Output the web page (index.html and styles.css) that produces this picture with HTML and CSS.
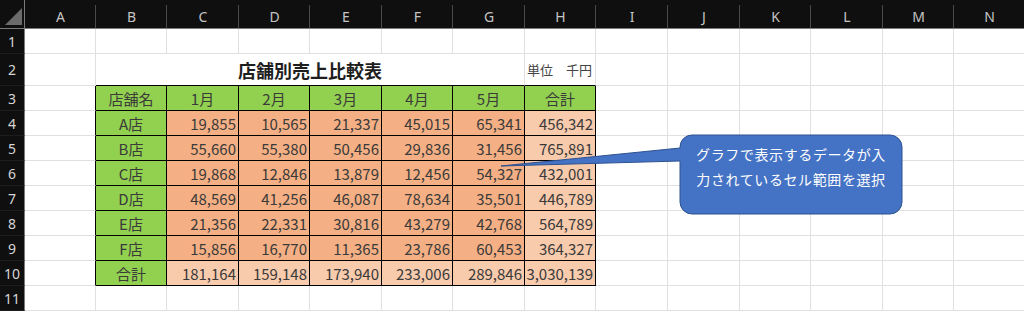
FILE: index.html
```html
<!DOCTYPE html>
<html lang="ja">
<head>
<meta charset="utf-8">
<title>店舗別売上比較表</title>
<link rel="stylesheet" href="styles.css">
</head>
<body>
<div class="sheet">
  <div class="row head">
    <div class="corner"><svg width="24" height="28" viewBox="0 0 24 28"><polygon points="5,25 22,8 22,25" fill="#6b6b6b"/></svg></div>
    <div class="col">A</div><div class="col">B</div><div class="col">C</div><div class="col">D</div><div class="col">E</div><div class="col">F</div><div class="col">G</div><div class="col">H</div><div class="col">I</div><div class="col">J</div><div class="col">K</div><div class="col">L</div><div class="col">M</div><div class="col">N</div>
  </div>
  <div class="row r1">
    <div class="num">1</div>
    <div class="c"></div><div class="c"></div><div class="c"></div><div class="c"></div><div class="c"></div><div class="c"></div><div class="c"></div><div class="c"></div><div class="c"></div><div class="c"></div><div class="c"></div><div class="c"></div><div class="c"></div><div class="c"></div>
  </div>
  <div class="row r2">
    <div class="num">2</div>
    <div class="c"></div>
    <div class="c title tt">店舗別売上比較表</div>
    <div class="c unit tt">単位　千円</div>
    <div class="c"></div><div class="c"></div><div class="c"></div><div class="c"></div><div class="c"></div><div class="c"></div>
  </div>
  <div class="row">
    <div class="num">3</div>
    <div class="c tl"></div>
    <div class="c t g ctr">店舗名</div><div class="c t g ctr">1月</div><div class="c t g ctr">2月</div><div class="c t g ctr">3月</div><div class="c t g ctr">4月</div><div class="c t g ctr">5月</div><div class="c t g ctr">合計</div>
    <div class="c"></div><div class="c"></div><div class="c"></div><div class="c"></div><div class="c"></div><div class="c"></div>
  </div>
  <div class="row">
    <div class="num">4</div>
    <div class="c tl"></div>
    <div class="c t g ctr">A店</div><div class="c t o">19,855</div><div class="c t o">10,565</div><div class="c t o">21,337</div><div class="c t o">45,015</div><div class="c t o">65,341</div><div class="c t p">456,342</div>
    <div class="c"></div><div class="c"></div><div class="c"></div><div class="c"></div><div class="c"></div><div class="c"></div>
  </div>
  <div class="row">
    <div class="num">5</div>
    <div class="c tl"></div>
    <div class="c t g ctr">B店</div><div class="c t o">55,660</div><div class="c t o">55,380</div><div class="c t o">50,456</div><div class="c t o">29,836</div><div class="c t o">31,456</div><div class="c t p">765,891</div>
    <div class="c"></div><div class="c"></div><div class="c"></div><div class="c"></div><div class="c"></div><div class="c"></div>
  </div>
  <div class="row">
    <div class="num">6</div>
    <div class="c tl"></div>
    <div class="c t g ctr">C店</div><div class="c t o">19,868</div><div class="c t o">12,846</div><div class="c t o">13,879</div><div class="c t o">12,456</div><div class="c t o">54,327</div><div class="c t p">432,001</div>
    <div class="c"></div><div class="c"></div><div class="c"></div><div class="c"></div><div class="c"></div><div class="c"></div>
  </div>
  <div class="row">
    <div class="num">7</div>
    <div class="c tl"></div>
    <div class="c t g ctr">D店</div><div class="c t o">48,569</div><div class="c t o">41,256</div><div class="c t o">46,087</div><div class="c t o">78,634</div><div class="c t o">35,501</div><div class="c t p">446,789</div>
    <div class="c"></div><div class="c"></div><div class="c"></div><div class="c"></div><div class="c"></div><div class="c"></div>
  </div>
  <div class="row">
    <div class="num">8</div>
    <div class="c tl"></div>
    <div class="c t g ctr">E店</div><div class="c t o">21,356</div><div class="c t o">22,331</div><div class="c t o">30,816</div><div class="c t o">43,279</div><div class="c t o">42,768</div><div class="c t p">564,789</div>
    <div class="c"></div><div class="c"></div><div class="c"></div><div class="c"></div><div class="c"></div><div class="c"></div>
  </div>
  <div class="row">
    <div class="num">9</div>
    <div class="c tl"></div>
    <div class="c t g ctr">F店</div><div class="c t o">15,856</div><div class="c t o">16,770</div><div class="c t o">11,365</div><div class="c t o">23,786</div><div class="c t o">60,453</div><div class="c t p">364,327</div>
    <div class="c"></div><div class="c"></div><div class="c"></div><div class="c"></div><div class="c"></div><div class="c"></div>
  </div>
  <div class="row">
    <div class="num">10</div>
    <div class="c tl"></div>
    <div class="c t g ctr">合計</div><div class="c t p">181,164</div><div class="c t p">159,148</div><div class="c t p">173,940</div><div class="c t p">233,006</div><div class="c t p">289,846</div><div class="c t p">3,030,139</div>
    <div class="c"></div><div class="c"></div><div class="c"></div><div class="c"></div><div class="c"></div><div class="c"></div>
  </div>
  <div class="row">
    <div class="num">11</div>
    <div class="c"></div><div class="c"></div><div class="c"></div><div class="c"></div><div class="c"></div><div class="c"></div><div class="c"></div><div class="c"></div><div class="c"></div><div class="c"></div><div class="c"></div><div class="c"></div><div class="c"></div><div class="c"></div>
  </div>

  <div class="callout">
    <svg class="callout-shape" width="410" height="90" viewBox="0 0 410 90">
      <path d="M192 5 H390 A12 12 0 0 1 402 17 V72 A12 12 0 0 1 390 84 H192 A12 12 0 0 1 180 72 V31 L1 36 L180 18 V17 A12 12 0 0 1 192 5 Z" fill="#4472c4" stroke="#2f528f" stroke-width="1"/>
    </svg>
    <div class="callout-text">グラフで表示するデータが入<br>力されているセル範囲を選択</div>
  </div>
</div>
</body>
</html>
```

FILE: styles.css
```css
* { box-sizing: border-box; }
html, body { margin: 0; padding: 0; background: #ffffff; }
body {
  width: 1024px;
  height: 312px;
  overflow: hidden;
  font-family: "Noto Sans CJK JP", "Noto Sans", sans-serif;
  color: #3a3a3a;
}
.sheet {
  position: relative;
  width: 1024px;
}
.row {
  display: grid;
  grid-template-columns: 25px 71px 71px 72px 71px 72px 71px 72px 71px 72px 72px 71px 72px 71px 71px;
  height: 25px;
}
.row.head { height: 29px; background: #0f0f0f; border-bottom: 1px solid #7a7a7a; }
.row.r2 { height: 32px; }

.corner { background: #0f0f0f; border-right: 1px solid #7a7a7a; }
.corner svg { display: block; }
.col {
  display: flex;
  align-items: center;
  justify-content: center;
  padding-top: 4px;
  font-family: "Noto Sans", "Open Sans", sans-serif;
  font-size: 14px;
  color: #c4c4c4;
  background: linear-gradient(#4a4a4a, #4a4a4a) right 5px / 1px calc(100% - 5px) no-repeat;
}
.num {
  background: #0f0f0f;
  border-right: 1px solid #7a7a7a;
  border-bottom: 1px solid #1c1c1c;
  display: flex;
  align-items: center;
  justify-content: center;
  font-family: "Noto Sans", "Open Sans", sans-serif;
  font-size: 14px;
  color: #d6d6d6;
}
.c {
  border-right: 1px solid #e0e0e0;
  border-bottom: 1px solid #e0e0e0;
  display: flex;
  align-items: center;
  justify-content: flex-end;
  padding-right: 2px;
  font-size: 15px;
  white-space: nowrap;
}
.t { border-right-color: #000; border-bottom-color: #000; }
.tl { border-right-color: #000; }
.tt { border-bottom-color: #000; }
.ctr { justify-content: center; padding-right: 0; }
.g { background: #92d050; }
.o { background: #f4b084; }
.p { background: #f8cbad; }

.title {
  grid-column: span 6;
  justify-content: center;
  padding-right: 0;
  padding-left: 0;
  font-size: 18px;
  font-weight: bold;
  color: #1e1e1e;
}
.unit {
  justify-content: flex-start;
  padding-left: 2px;
  font-size: 13px;
  color: #444444;
}

.callout {
  position: absolute;
  left: 500px;
  top: 130px;
  width: 410px;
  height: 90px;
}
.callout-shape { display: block; }
.callout-text {
  position: absolute;
  left: 180px;
  top: 12px;
  width: 222px;
  text-align: center;
  font-size: 14px;
  letter-spacing: 0.6px;
  line-height: 25px;
  color: #ffffff;
}
```
